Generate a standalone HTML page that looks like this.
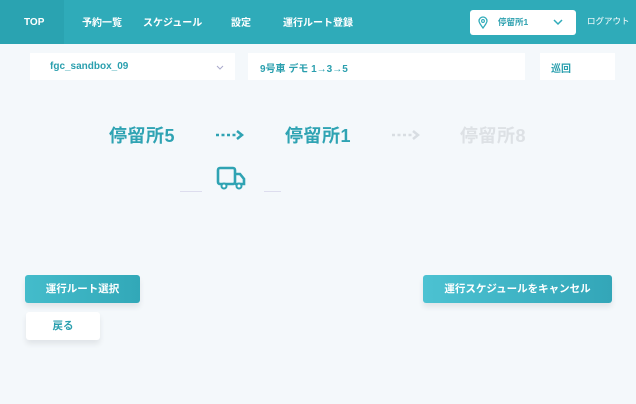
<!DOCTYPE html>
<html><head><meta charset="utf-8"><style>
*{margin:0;padding:0;box-sizing:border-box}
body{width:636px;height:404px;overflow:hidden;background:#f4f8fb;font-family:"Liberation Sans","Noto Sans CJK JP",sans-serif;position:relative}
.hd{position:absolute;left:0;top:0;width:636px;height:44px;background:#2fabb9}
.hd .top{position:absolute;left:0;top:0;width:64px;height:44px;background:#2aa3b1}
.hd span{position:absolute;top:14px;color:#fff;font-size:10px;font-weight:bold}
.sel{position:absolute;left:470px;top:10px;width:106px;height:25px;background:#fff;border-radius:3px}
.box{position:absolute;background:#fff;height:27px;top:53px;font-size:10px;font-weight:bold;color:#2a9fae;padding:8px 0 0 20px}
.st{position:absolute;top:122px;font-size:18px;font-weight:bold;color:#2fa3b3;letter-spacing:0.5px}
.btn{position:absolute;border-radius:3px;color:#fff;font-size:10.5px;font-weight:bold;text-align:center;line-height:28px;box-shadow:0 4px 6px rgba(0,0,0,.08)}
</style></head><body>
<div class="hd"><div class="top"></div>
<span style="left:24px;top:17px">TOP</span><span style="left:82px">予約一覧</span><span style="left:143px">スケジュール</span><span style="left:231px">設定</span><span style="left:283px">運行ルート登録</span>
<div class="sel"><svg style="position:absolute;left:8px;top:6px" width="10" height="13" viewBox="0 0 10 13"><path d="M5 12C2 8 1 6.5 1 5a4 4 0 0 1 8 0c0 1.5-1 3-4 7z" fill="none" stroke="#2fabb9" stroke-width="1.3"/><circle cx="5" cy="5" r="1.4" fill="none" stroke="#2fabb9" stroke-width="1.1"/></svg>
<span style="left:28px;top:6px;color:#2a9fae;font-size:8.5px">停留所1</span>
<svg style="position:absolute;left:83px;top:9px" width="10" height="7"><path d="M1 1l4 4 4-4" fill="none" stroke="#2fabb9" stroke-width="1.5"/></svg></div>
<span style="left:587px;font-size:8.5px;font-weight:normal;top:15px">ログアウト</span></div>
<div class="box" style="left:30px;width:205px">fgc_sandbox_09<svg style="position:absolute;left:186px;top:12px" width="8" height="5"><path d="M1 1l3 3 3-3" fill="none" stroke="#aac" stroke-width="1"/></svg></div>
<div class="box" style="left:248px;width:277px;padding-left:12px;padding-top:7px">9号車 デモ 1→3→5</div>
<div class="box" style="left:540px;width:75px;padding-left:11px;padding-top:7px">巡回</div>
<div class="st" style="left:109px">停留所5</div>
<div class="st" style="left:285px">停留所1</div>
<div class="st" style="left:460px;color:#dde1e5">停留所8</div>
<svg style="position:absolute;left:214px;top:129px" width="34" height="12"><path d="M2 6h20" stroke="#2fa3b3" stroke-width="2.5" stroke-dasharray="3 2.5"/><path d="M23 2l5 4-5 4" fill="none" stroke="#2fa3b3" stroke-width="2.5"/></svg>
<svg style="position:absolute;left:390px;top:129px" width="34" height="12"><path d="M2 6h20" stroke="#d8dde2" stroke-width="2.5" stroke-dasharray="3 2.5"/><path d="M23 2l5 4-5 4" fill="none" stroke="#d8dde2" stroke-width="2.5"/></svg>
<div style="position:absolute;left:180px;top:191px;width:22px;height:1px;background:#dde"></div>
<div style="position:absolute;left:264px;top:191px;width:17px;height:1px;background:#dde"></div>
<svg style="position:absolute;left:216px;top:166px" width="32" height="26" viewBox="0 0 32 26"><rect x="2" y="2" width="17" height="16" rx="2" fill="none" stroke="#2fa3b3" stroke-width="2.6"/><path d="M19 8h5l4 5v5h-9" fill="none" stroke="#2fa3b3" stroke-width="2.6"/><circle cx="8" cy="20" r="2.5" fill="#fff" stroke="#2fa3b3" stroke-width="2"/><circle cx="23" cy="20" r="2.5" fill="#fff" stroke="#2fa3b3" stroke-width="2"/></svg>
<div class="btn" style="left:25px;top:275px;width:115px;background:linear-gradient(90deg,#44bccb,#32a8b8)">運行ルート選択</div>
<div class="btn" style="left:26px;top:312px;width:74px;background:#fff;color:#2a9fae">戻る</div>
<div class="btn" style="left:423px;top:275px;width:189px;background:linear-gradient(90deg,#4cc2d2,#33a6b8)">運行スケジュールをキャンセル</div>
</body></html>
